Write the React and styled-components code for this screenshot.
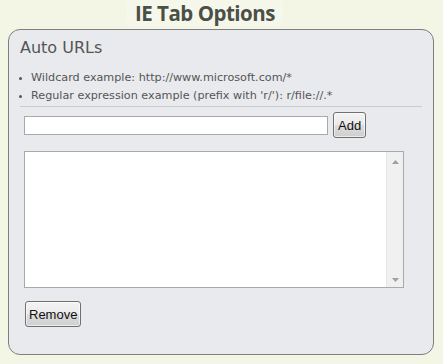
import React from "react";
import styled, { createGlobalStyle } from "styled-components";

const GlobalStyle = createGlobalStyle`
  html, body {
    margin: 0;
    padding: 0;
    background: #f3f5e5;
  }
  body {
    width: 443px;
    height: 364px;
    overflow: hidden;
  }
`;

const Page = styled.div`
  display: flex;
  flex-direction: column;
  align-items: flex-start;
  width: 443px;
`;

const Title = styled.h1`
  margin: 0 0 0 127px;
  height: 29px;
  padding: 0 8px;
  font-family: "Open Sans", sans-serif;
  font-weight: 700;
  font-size: 20.5px;
  line-height: 26px;
  letter-spacing: -0.5px;
  color: #4b5047;
  background: linear-gradient(to bottom, #f5f7ea, #f7f8ed 60%, #f3f5e5);
`;

const Panel = styled.section`
  box-sizing: border-box;
  width: 426px;
  height: 326px;
  margin-left: 8px;
  border: 1px solid #7d7f80;
  border-radius: 12px;
  background: #e9eaed;
  padding: 7px 11px 0 11px;
  display: flex;
  flex-direction: column;
`;

const Heading = styled.h2`
  margin: 0;
  font-family: "DejaVu Sans", sans-serif;
  font-weight: 400;
  font-size: 16px;
  line-height: 22px;
  color: #555;
`;

const Hints = styled.ul`
  margin: 10px 0 0 0;
  padding: 0 0 1px 11px;
  border-bottom: 1px solid #c9cbcd;
  font-family: "DejaVu Sans", sans-serif;
  font-size: 11.2px;
  line-height: 18px;
  color: #555;
`;

const Hint = styled.li`
  list-style: disc;
  &::marker {
    font-size: 9px;
  }
`;

const AddRow = styled.div`
  display: flex;
  align-items: center;
  gap: 5px;
  margin: 5px 0 0 4px;
`;

const UrlInput = styled.input`
  box-sizing: border-box;
  width: 304px;
  height: 19px;
  border: 1px solid #a9a9a9;
  background: #fff;
  padding: 1px 3px;
  outline: none;
`;

const Button = styled.button`
  box-sizing: border-box;
  height: 26px;
  padding: 0 ${(p) => p.$pad || 4}px;
  font-family: "Liberation Sans", Arial, sans-serif;
  font-size: 13px;
  color: #111;
  border: 1px solid #707070;
  border-radius: 3px;
  background: linear-gradient(to bottom, #f3f3f3 0%, #ebebeb 50%, #dddddd 51%, #cfcfcf 100%);
  box-shadow: inset 0 0 0 1px rgba(255, 255, 255, 0.6);
`;

const ListBox = styled.div`
  box-sizing: border-box;
  display: flex;
  margin: 13px 0 0 4px;
  width: 380px;
  height: 137px;
  border: 1px solid #a9a9a9;
  background: #fff;
`;

const ListArea = styled.div`
  flex: 1;
`;

const ScrollTrack = styled.div`
  width: 16px;
  display: flex;
  flex-direction: column;
  justify-content: space-between;
  align-items: center;
  padding: 8px 0 5px;
  background: #f0f0f0;
  border-left: 1px solid #e6e6e6;
`;

const Arrow = styled.svg`
  width: 7px;
  height: 4px;
  fill: #a0a0a0;
`;

const Footer = styled.div`
  margin: 13px 0 0 5px;
`;

export default function App() {
  return (
    <>
      <GlobalStyle />
      <Page>
        <Title>IE Tab Options</Title>
        <Panel>
          <Heading>Auto URLs</Heading>
          <Hints>
            <Hint>Wildcard example: http://www.microsoft.com/*</Hint>
            <Hint>Regular expression example (prefix with 'r/'): r/file://.*</Hint>
          </Hints>
          <AddRow>
            <UrlInput type="text" />
            <Button $pad={4}>Add</Button>
          </AddRow>
          <ListBox>
            <ListArea />
            <ScrollTrack>
              <Arrow viewBox="0 0 7 4">
                <polygon points="3.5,0 7,4 0,4" />
              </Arrow>
              <Arrow viewBox="0 0 7 4">
                <polygon points="0,0 7,0 3.5,4" />
              </Arrow>
            </ScrollTrack>
          </ListBox>
          <Footer>
            <Button $pad={3}>Remove</Button>
          </Footer>
        </Panel>
      </Page>
    </>
  );
}
